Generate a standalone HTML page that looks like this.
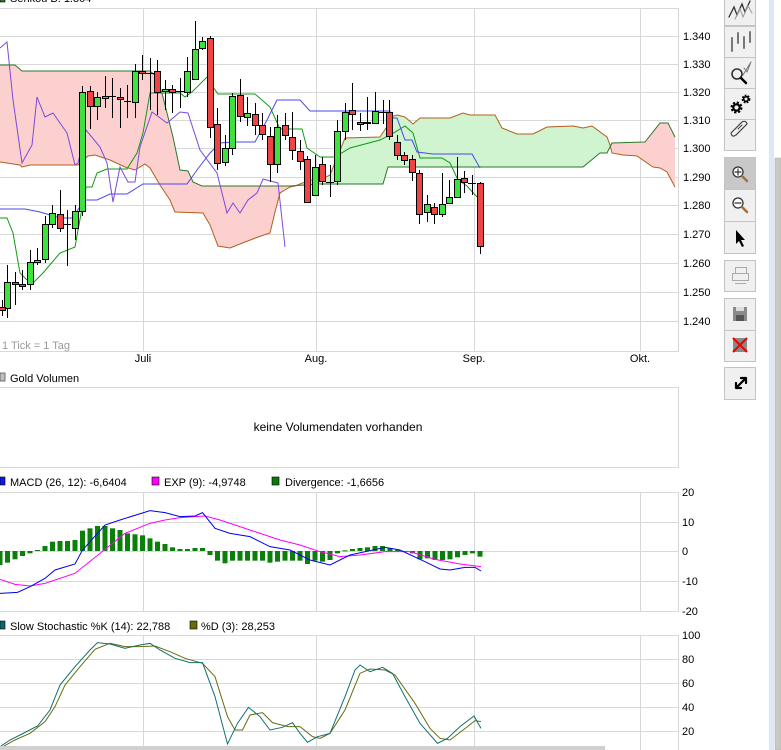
<!DOCTYPE html>
<html><head><meta charset="utf-8"><style>
html,body{margin:0;padding:0;background:#fff;width:781px;height:750px;overflow:hidden}
svg{display:block;font-family:"Liberation Sans",sans-serif;font-size:11px}
</style></head><body>
<svg width="781" height="750" viewBox="0 0 781 750" xmlns="http://www.w3.org/2000/svg">
<rect x="0" y="0" width="781" height="750" fill="#fff"/>
<rect x="0" y="-4" width="5" height="6" fill="#2a7a2a" stroke="#000" stroke-width="0.6"/>
<text x="10" y="2" fill="#000">Senkou B: 1.304</text>

<g stroke="#d8d8d8" stroke-width="1" fill="none">
<path d="M0 8.5H678.5V351.5H0"/>
<path d="M0 36.5H678M0 64.5H678M0 92.5H678M0 120.5H678M0 148.5H678M0 177.5H678M0 205.5H678M0 234.5H678M0 263.5H678M0 292.5H678M0 321.5H678"/>
<path d="M143.5 8V351M316.5 8V351M474.5 8V351M640.5 8V351"/>
</g>
<g fill="#000">
<text x="683" y="40">1.340</text><text x="683" y="68">1.330</text><text x="683" y="96">1.320</text>
<text x="683" y="124">1.310</text><text x="683" y="152">1.300</text><text x="683" y="181">1.290</text>
<text x="683" y="209">1.280</text><text x="683" y="238">1.270</text><text x="683" y="267">1.260</text>
<text x="683" y="296">1.250</text><text x="683" y="325">1.240</text>
<text x="143" y="362" text-anchor="middle">Juli</text><text x="316" y="362" text-anchor="middle">Aug.</text>
<text x="474" y="362" text-anchor="middle">Sep.</text><text x="640" y="362" text-anchor="middle">Okt.</text>
</g>
<text x="2" y="349" fill="#999">1 Tick = 1 Tag</text>

<polygon fill="#fdd0d0" points="0,65 15,65 22,71 150,71 157,77 163,97 173,137 180,170 188,171 193,182 202,186 290,186 290,187 280,193 275,212 270,233 258,237 245,242 230,248 218,246 210,225 203,213 175,212 170,200 160,185 150,168 145,164 135,170 125,167 110,160 95,155 88,156 78,165 30,165 22,167 20,165 0,162"/>
<polygon fill="#d0f3d0" points="290,187 295,186 310,180 320,180 330,175 345,138 380,137 388,125 390,117 397,115 405,117 413,124 420,118 450,118 463,113 470,115 495,115 502,128 517,134 533,134 547,127 573,126 583,128 592,126 607,137 610,145 607,153 600,153 583,167 388,167 383,184 318,184 290,186"/>
<polygon fill="#fdd0d0" points="610,145 612,143 645,142 660,123 668,123 675,137 675,187 667,172 660,168 653,167 637,156 623,155 612,153"/>
<g fill="none" stroke-width="1">
<polyline stroke="#b0601e" points="0,162 20,165 22,167 30,165 78,165 88,156 95,155 110,160 125,167 135,170 145,164 150,168 160,185 170,200 175,212 203,213 210,225 218,246 230,248 245,242 258,237 270,233 275,212 280,193 290,187 295,186 310,180 320,180 330,175 345,138 380,137 388,125 390,117 397,115 405,117 413,124 420,118 450,118 463,113 470,115 495,115 502,128 517,134 533,134 547,127 573,126 583,128 592,126 607,137 610,145 612,153 623,155 637,156 653,167 660,168 667,172 675,187"/>
<polyline stroke="#2a7a2a" points="0,65 15,65 22,71 150,71 157,77 163,97 173,137 180,170 188,171 193,182 202,186 290,186 318,184 383,184 388,167 583,167 600,153 607,153 612,143 645,142 660,123 668,123 675,137"/>
<polyline stroke="#119911" points="0,218 7,218 13,233 20,273 27,280 33,283 43,273 60,253 75,247 78,230 86,187 92,187 97,173 107,169 127,169 137,153 143,133 150,93 180,93 185,97 192,92 207,77 213,87 218,94 255,94 270,107 280,129 302,129 307,148 320,157 335,157 350,148 380,140 390,135 405,126 413,133 420,158 442,158 450,163 458,180 467,186 477,197"/>
<polyline stroke="#4a4aee" points="0,209 25,209 40,212 60,218 72,218 85,200 97,200 110,194 127,194 143,184 187,184 197,170 210,153 220,143 233,142 255,142 267,120 277,100 300,100 310,111 390,111 390,118 397,118 405,140 412,140 417,152 433,154 472,154 480,168"/>
<polyline stroke="#7a4ade" points="0,48 7,42 13,100 22,163 32,145 37,97 45,117 53,113 67,133 75,165 78,163 86,130 100,147 107,163 113,202 120,167 128,182 135,182 140,147 152,112 167,123 180,112 188,113 200,150 217,173 227,213 233,203 240,213 248,200 257,193 263,179 278,183 285,247"/>
</g>

<g stroke="#000" stroke-width="1">
<path fill="none" d="M2.5 300V316M7.5 265V318M15.5 272V305M22.5 270V290M30.5 250V290M37.5 248V265M45.5 216V263M52.5 205V228M60.5 190V232M67.5 210V266M75.5 205V240M82.5 86V216M90.5 86V129M97.5 92V120M105.5 76V108M112.5 78V118M120.5 88V128M127.5 85V118M135.5 64V118M142.5 55V80M150.5 58V110M157.5 60V115M165.5 80V110M172.5 85V113M180.5 78V108M187.5 57V97M195.5 21V80M202.5 37V50M210.5 36V138M217.5 108V170M225.5 135V166M232.5 93V155M240.5 79V122M247.5 97V126M255.5 103V135M262.5 113V140M270.5 127V182M277.5 115V173M285.5 113V140M292.5 112V160M300.5 140V170M307.5 156V203M315.5 155V196M322.5 157V185M330.5 165V197M337.5 120V185M345.5 103V140M352.5 83V130M360.5 113V131M367.5 97V130M375.5 92V124M383.5 100V124M389.5 100V140M397.5 135V160M404.5 152V165M412.5 155V181M419.5 170V224M427.5 195V222M434.5 203V224M442.5 173V217M449.5 180V204M457.5 157V198M464.5 171V193M472.5 175V195M480.5 182V254"/>
<path fill="none" d="M64 224.5H71M108 96.5H116M124 101.5H131M146 73.5H154M176 91.5H184M326 182.5H334M379 112.5H387M468 183.5H476"/>
<g fill="#3de23d">
<rect x="4.5" y="282.5" width="6" height="26"/><rect x="27.5" y="262.5" width="6" height="22"/><rect x="34.5" y="260.5" width="6" height="2"/><rect x="42.5" y="224.5" width="6" height="35"/><rect x="49.5" y="213.5" width="6" height="11"/><rect x="72.5" y="211.5" width="6" height="17"/><rect x="79.5" y="92.5" width="6" height="119"/><rect x="94.5" y="97.5" width="6" height="9"/><rect x="102.5" y="96.5" width="6" height="2"/><rect x="132.5" y="71.5" width="6" height="31"/><rect x="162.5" y="89.5" width="6" height="2"/><rect x="184.5" y="71.5" width="6" height="21"/><rect x="192.5" y="49.5" width="6" height="30"/><rect x="199.5" y="41.5" width="6" height="7"/><rect x="222.5" y="148.5" width="6" height="14"/><rect x="229.5" y="96.5" width="6" height="52"/><rect x="244.5" y="113.5" width="6" height="4"/><rect x="274.5" y="127.5" width="6" height="37"/><rect x="312.5" y="167.5" width="6" height="28"/><rect x="334.5" y="131.5" width="6" height="50"/><rect x="342.5" y="112.5" width="6" height="19"/><rect x="364.5" y="122.5" width="6" height="1"/><rect x="372.5" y="111.5" width="6" height="12"/><rect x="424.5" y="204.5" width="6" height="8"/><rect x="439.5" y="204.5" width="6" height="10"/><rect x="446.5" y="197.5" width="6" height="6"/><rect x="454.5" y="179.5" width="6" height="18"/>
</g>
<g fill="#ee4444">
<rect x="-0.5" y="307.5" width="6" height="3"/><rect x="12.5" y="282.5" width="6" height="2"/><rect x="19.5" y="284.5" width="6" height="2"/><rect x="57.5" y="214.5" width="6" height="14"/><rect x="87.5" y="91.5" width="6" height="15"/><rect x="117.5" y="97.5" width="6" height="2"/><rect x="139.5" y="71.5" width="6" height="2"/><rect x="154.5" y="71.5" width="6" height="21"/><rect x="169.5" y="89.5" width="6" height="3"/><rect x="207.5" y="38.5" width="6" height="89"/><rect x="214.5" y="124.5" width="6" height="39"/><rect x="237.5" y="95.5" width="6" height="21"/><rect x="252.5" y="114.5" width="6" height="11"/><rect x="259.5" y="125.5" width="6" height="9"/><rect x="267.5" y="136.5" width="6" height="28"/><rect x="282.5" y="125.5" width="6" height="10"/><rect x="289.5" y="137.5" width="6" height="13"/><rect x="297.5" y="151.5" width="6" height="10"/><rect x="304.5" y="159.5" width="6" height="43"/><rect x="319.5" y="164.5" width="6" height="17"/><rect x="349.5" y="110.5" width="6" height="4"/><rect x="357.5" y="122.5" width="6" height="2"/><rect x="386.5" y="112.5" width="6" height="24"/><rect x="394.5" y="142.5" width="6" height="13"/><rect x="401.5" y="155.5" width="6" height="5"/><rect x="409.5" y="159.5" width="6" height="13"/><rect x="416.5" y="173.5" width="6" height="41"/><rect x="431.5" y="207.5" width="6" height="7"/><rect x="461.5" y="178.5" width="6" height="4"/><rect x="477.5" y="183.5" width="6" height="63"/>
</g>
</g>

<rect x="0" y="373" width="5" height="8" fill="#c0c0c0" stroke="#555" stroke-width="0.8"/>
<text x="10" y="382" fill="#000">Gold Volumen</text>
<path d="M0 387.5H678.5V467.5H0" fill="none" stroke="#d8d8d8"/>
<text x="338" y="431" text-anchor="middle" fill="#000" font-size="12">keine Volumendaten vorhanden</text>

<rect x="0" y="477" width="5" height="8" fill="#1515ee" stroke="#000" stroke-width="0.6"/>
<text x="10" y="486" fill="#000">MACD (26, 12): -6,6404</text>
<rect x="152" y="477" width="7" height="8" fill="#f0f" stroke="#000" stroke-width="0.6"/>
<text x="164" y="486" fill="#000">EXP (9): -4,9748</text>
<rect x="272" y="477" width="7" height="8" fill="#0a7a0a" stroke="#000" stroke-width="0.6"/>
<text x="285" y="486" fill="#000">Divergence: -1,6656</text>
<g stroke="#d8d8d8" fill="none">
<path d="M0 492.5H678.5V611.5H0"/>
<path d="M0 522.5H678M0 551.5H678M0 581.5H678"/>
<path d="M143.5 492V611M316.5 492V611M474.5 492V611M640.5 492V611"/>
</g>
<g fill="#000"><text x="682" y="496">20</text><text x="682" y="526">10</text><text x="682" y="555">0</text><text x="682" y="585">-10</text><text x="682" y="615">-20</text></g>
<g transform="translate(0,470) scale(0.5,0.33333)">
<g fill="#0a800a">
<rect x="-5" y="243" width="10" height="42"/><rect x="10" y="243" width="10" height="35"/><rect x="25" y="243" width="10" height="25"/><rect x="40" y="243" width="10" height="15"/><rect x="55" y="243" width="10" height="7"/><rect x="70" y="240" width="10" height="3"/><rect x="85" y="228" width="10" height="15"/><rect x="100" y="215" width="10" height="28"/><rect x="115" y="213" width="10" height="30"/><rect x="130" y="213" width="10" height="30"/><rect x="145" y="210" width="10" height="33"/><rect x="160" y="182" width="10" height="61"/><rect x="175" y="175" width="10" height="68"/><rect x="190" y="168" width="10" height="75"/><rect x="205" y="168" width="10" height="75"/><rect x="220" y="175" width="10" height="68"/><rect x="235" y="180" width="10" height="63"/><rect x="250" y="190" width="10" height="53"/><rect x="265" y="193" width="10" height="50"/><rect x="280" y="196" width="10" height="47"/><rect x="295" y="205" width="10" height="38"/><rect x="310" y="215" width="10" height="28"/><rect x="325" y="222" width="10" height="21"/><rect x="340" y="232" width="10" height="11"/><rect x="355" y="237" width="10" height="6"/><rect x="370" y="237" width="10" height="6"/><rect x="385" y="234" width="10" height="9"/><rect x="400" y="234" width="10" height="9"/><rect x="415" y="243" width="10" height="12"/><rect x="430" y="243" width="10" height="29"/><rect x="445" y="243" width="10" height="37"/><rect x="460" y="243" width="10" height="29"/><rect x="475" y="243" width="10" height="29"/><rect x="490" y="243" width="10" height="29"/><rect x="505" y="243" width="10" height="29"/><rect x="520" y="243" width="10" height="29"/><rect x="535" y="243" width="10" height="35"/><rect x="550" y="243" width="10" height="32"/><rect x="565" y="243" width="10" height="29"/><rect x="580" y="243" width="10" height="29"/><rect x="595" y="243" width="10" height="29"/><rect x="610" y="243" width="10" height="39"/><rect x="625" y="243" width="10" height="29"/><rect x="640" y="243" width="10" height="32"/><rect x="655" y="243" width="10" height="27"/><rect x="670" y="243" width="10" height="7"/><rect x="685" y="241" width="10" height="3"/><rect x="700" y="237" width="10" height="6"/><rect x="715" y="234" width="10" height="9"/><rect x="730" y="232" width="10" height="11"/><rect x="745" y="228" width="10" height="15"/><rect x="760" y="228" width="10" height="15"/><rect x="775" y="234" width="10" height="9"/><rect x="790" y="240" width="10" height="3"/><rect x="805" y="243" width="10" height="3"/><rect x="820" y="243" width="10" height="7"/><rect x="835" y="243" width="10" height="25"/><rect x="850" y="243" width="10" height="22"/><rect x="865" y="243" width="10" height="27"/><rect x="880" y="243" width="10" height="27"/><rect x="895" y="243" width="10" height="25"/><rect x="910" y="243" width="10" height="19"/><rect x="925" y="243" width="10" height="12"/><rect x="940" y="243" width="10" height="7"/><rect x="955" y="243" width="10" height="17"/>
</g>
<polyline fill="none" stroke="#ff00ff" stroke-width="1" vector-effect="non-scaling-stroke" points="0,328 30,343 60,348 90,340 150,310 200,250 250,190 300,160 330,150 360,143 410,138 440,150 500,180 560,210 600,225 640,245 680,260 720,255 770,245 820,245 870,268 920,282 962,290"/>
<polyline fill="none" stroke="#0000ee" stroke-width="1" vector-effect="non-scaling-stroke" points="0,370 35,367 60,350 90,325 110,300 150,282 165,240 210,165 240,150 300,122 330,128 360,140 390,138 405,128 430,175 460,190 500,200 540,230 580,240 620,270 660,285 700,255 770,232 800,240 850,275 880,297 900,300 930,292 950,292 962,303"/>
</g>

<rect x="0" y="621" width="5" height="8" fill="#0a6a6a" stroke="#000" stroke-width="0.6"/>
<text x="10" y="630" fill="#000">Slow Stochastic %K (14): 22,788</text>
<rect x="190" y="621" width="7" height="8" fill="#6a6a0a" stroke="#000" stroke-width="0.6"/>
<text x="201" y="630" fill="#000">%D (3): 28,253</text>
<g stroke="#d8d8d8" fill="none">
<path d="M0 635.5H678.5V750"/>
<path d="M0 659.5H678M0 683.5H678M0 707.5H678M0 731.5H678"/>
<path d="M143.5 635V750M316.5 635V750M474.5 635V750M640.5 635V750"/>
</g>
<g fill="#000"><text x="682" y="639">100</text><text x="682" y="663">80</text><text x="682" y="687">60</text><text x="682" y="711">40</text><text x="682" y="735">20</text></g>
<g transform="translate(0,470) scale(0.5,0.33333)">
<polyline fill="none" stroke="#6b6b10" stroke-width="1" vector-effect="non-scaling-stroke" points="0,835 30,810 60,790 90,755 110,710 130,645 160,590 190,538 220,520 250,530 280,530 310,528 340,545 370,565 405,580 430,620 455,740 470,780 485,780 500,735 525,728 545,758 575,770 600,770 625,800 640,805 660,790 690,720 720,610 740,597 770,600 790,615 830,700 860,775 880,805 900,810 935,770 950,752 962,755"/>
<polyline fill="none" stroke="#107070" stroke-width="1" vector-effect="non-scaling-stroke" points="0,830 20,810 40,795 75,768 100,720 120,645 150,590 180,540 195,518 220,522 250,535 280,525 300,520 320,540 350,565 380,578 405,578 430,680 455,822 475,760 497,712 520,740 540,780 565,772 585,758 600,790 615,817 635,800 660,790 690,680 710,600 720,585 740,605 765,592 785,610 810,680 840,760 875,820 895,805 920,770 948,738 962,775"/>
</g>
<rect x="0" y="746" width="605" height="4" fill="#d0d0d0"/>

<g stroke="#c4c4c4" fill="#f0f0f0">
<rect x="724.5" y="-5.5" width="31" height="31"/><rect x="724.5" y="26.5" width="31" height="31"/><rect x="724.5" y="57.5" width="31" height="31"/><rect x="724.5" y="88.5" width="31" height="31"/><rect x="724.5" y="119.5" width="31" height="31"/>
<rect x="724.5" y="157.5" width="31" height="32" fill="#c8c8c8"/><rect x="724.5" y="189.5" width="31" height="32"/><rect x="724.5" y="221.5" width="31" height="32"/>
<rect x="724.5" y="260.5" width="31" height="31"/>
<rect x="724.5" y="298.5" width="31" height="32"/><rect x="724.5" y="330.5" width="31" height="31"/>
<rect x="724.5" y="367.5" width="31" height="32"/>
</g>
<g fill="none" stroke-linecap="round">
<path d="M729 17L734 7L737 15L742 4L745 12L750 1" stroke="#333" stroke-width="1.3"/>
<path d="M735 19L740 9L743 17L748 6L752 13" stroke="#999" stroke-width="1"/>
<path d="M732 38V51M738 33V43M744 37V48M750 32V42" stroke="#777" stroke-width="2"/>
<path d="M743 75L751 62M744 68L747 72L751 62" stroke="#777" stroke-width="1"/>
<circle cx="737" cy="74" r="5" stroke="#333" stroke-width="1.6"/>
<path d="M741 78L746 83" stroke="#000" stroke-width="2.5"/>
<path d="M731 133L742 122Q746 120 747 124L736 135Q732 138 731 133Z" stroke="#444" stroke-width="1.2"/>
<path d="M738 129L742 125" stroke="#444" stroke-width="1"/>
<circle cx="738" cy="172" r="5" stroke="#333" stroke-width="1.3" fill="#fff"/>
<path d="M735 172H741M738 169V175" stroke="#333" stroke-width="1.2"/>
<path d="M742 176L747 181" stroke="#a07040" stroke-width="2.5"/>
<circle cx="738" cy="203" r="5" stroke="#333" stroke-width="1.3" fill="#fff"/>
<path d="M735 203H741" stroke="#333" stroke-width="1.2"/>
<path d="M742 207L747 212" stroke="#a07040" stroke-width="2.5"/>
<path d="M736 388L746 378M736 388V383M736 388H741M746 378V383M746 378H741" stroke="#000" stroke-width="2.2"/>
</g>
<!-- gears -->
<circle cx="736.5" cy="107.5" r="4.5" fill="none" stroke="#000" stroke-width="3" stroke-dasharray="2 1.55"/>
<circle cx="736.5" cy="107.5" r="3.2" fill="none" stroke="#000" stroke-width="2.2"/>
<circle cx="746" cy="99" r="3.2" fill="none" stroke="#000" stroke-width="2.4" stroke-dasharray="1.6 1.1"/>
<circle cx="746" cy="99" r="2.3" fill="none" stroke="#000" stroke-width="1.6"/>
<path d="M736 230L736 244L739 241L742 247L744 246L741 240L745 240Z" fill="#000"/>
<g fill="none" stroke="#aaa" stroke-width="1">
<rect x="732.5" y="273.5" width="16" height="7"/><path d="M735.5 273.5V267.5H746.5V273.5M735 283.5H746"/>
</g>
<rect x="733" y="307" width="14" height="14" fill="#8a8a8a"/><rect x="736" y="307" width="8" height="4" fill="#ddd"/><rect x="736" y="315" width="8" height="6" fill="#555"/>
<rect x="733" y="338" width="14" height="14" fill="#8a8a8a"/>
<path d="M733 338L747 352M747 338L733 352" stroke="#e00" stroke-width="2"/>

<rect x="769" y="0" width="5" height="750" fill="#dde8f6"/>
<rect x="775" y="158" width="6" height="592" fill="#c8c8c8" stroke="#aaa" stroke-width="0.5"/>
</svg>
</body></html>
